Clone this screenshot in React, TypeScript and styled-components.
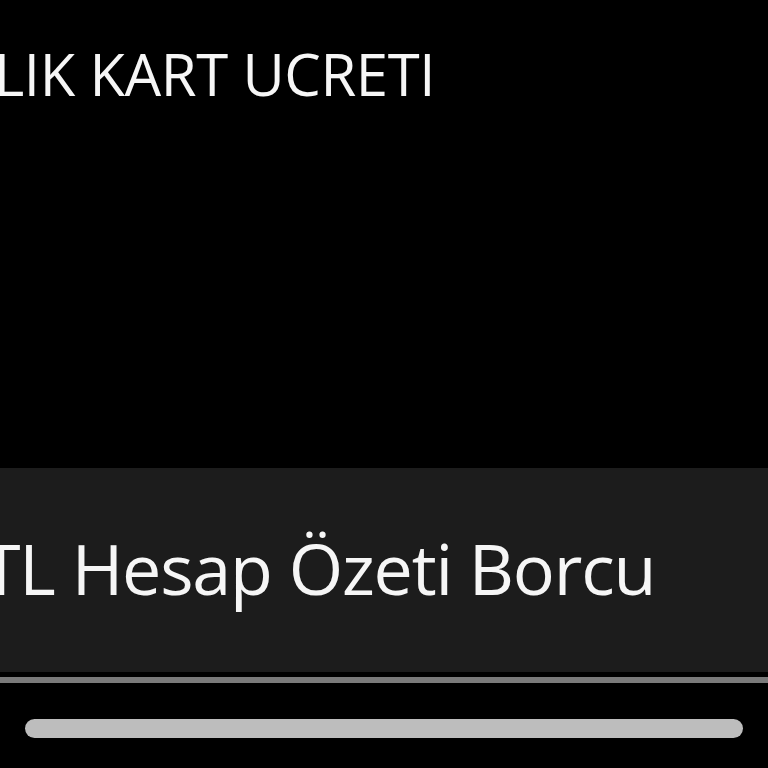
import React from "react";
import styled, { createGlobalStyle } from "styled-components";

const Global = createGlobalStyle`
  html, body { margin: 0; padding: 0; background: #000; }
  * { box-sizing: border-box; }
`;

const Screen = styled.div`
  width: 768px;
  height: 768px;
  background: #000;
  display: flex;
  flex-direction: column;
  overflow: hidden;
  font-family: "Open Sans", "DejaVu Sans", sans-serif;
  font-weight: 400;
  color: #f6f6f6;
`;

const Header = styled.div`
  height: 468px;
  padding-top: 45px;
`;

const Label = styled.div<{ $shift: number; $size: number; $track: number }>`
  font-size: ${(p) => p.$size}px;
  line-height: 1;
  letter-spacing: ${(p) => p.$track}px;
  margin-left: ${(p) => p.$shift}px;
  white-space: nowrap;
`;

const Panel = styled.div`
  height: 204px;
  background: #1c1c1c;
  display: flex;
  align-items: center;
  padding-bottom: 4px;
`;

const Divider = styled.div`
  margin-top: 5px;
  height: 6px;
  background: #7a7a7a;
`;

const Footer = styled.div`
  flex: 1;
  padding: 36px 25px 0 25px;
`;

const Thumb = styled.div`
  height: 19px;
  border-radius: 10px;
  background: #bdbdbd;
`;

export default function App() {
  return (
    <>
      <Global />
      <Screen>
        <Header>
          <Label $size={58} $shift={-6} $track={-0.4}>LIK KART UCRETI</Label>
        </Header>
        <Panel>
          <Label $size={70} $shift={-18} $track={-1.2}>TL Hesap Özeti Borcu</Label>
        </Panel>
        <Divider />
        <Footer>
          <Thumb />
        </Footer>
      </Screen>
    </>
  );
}
